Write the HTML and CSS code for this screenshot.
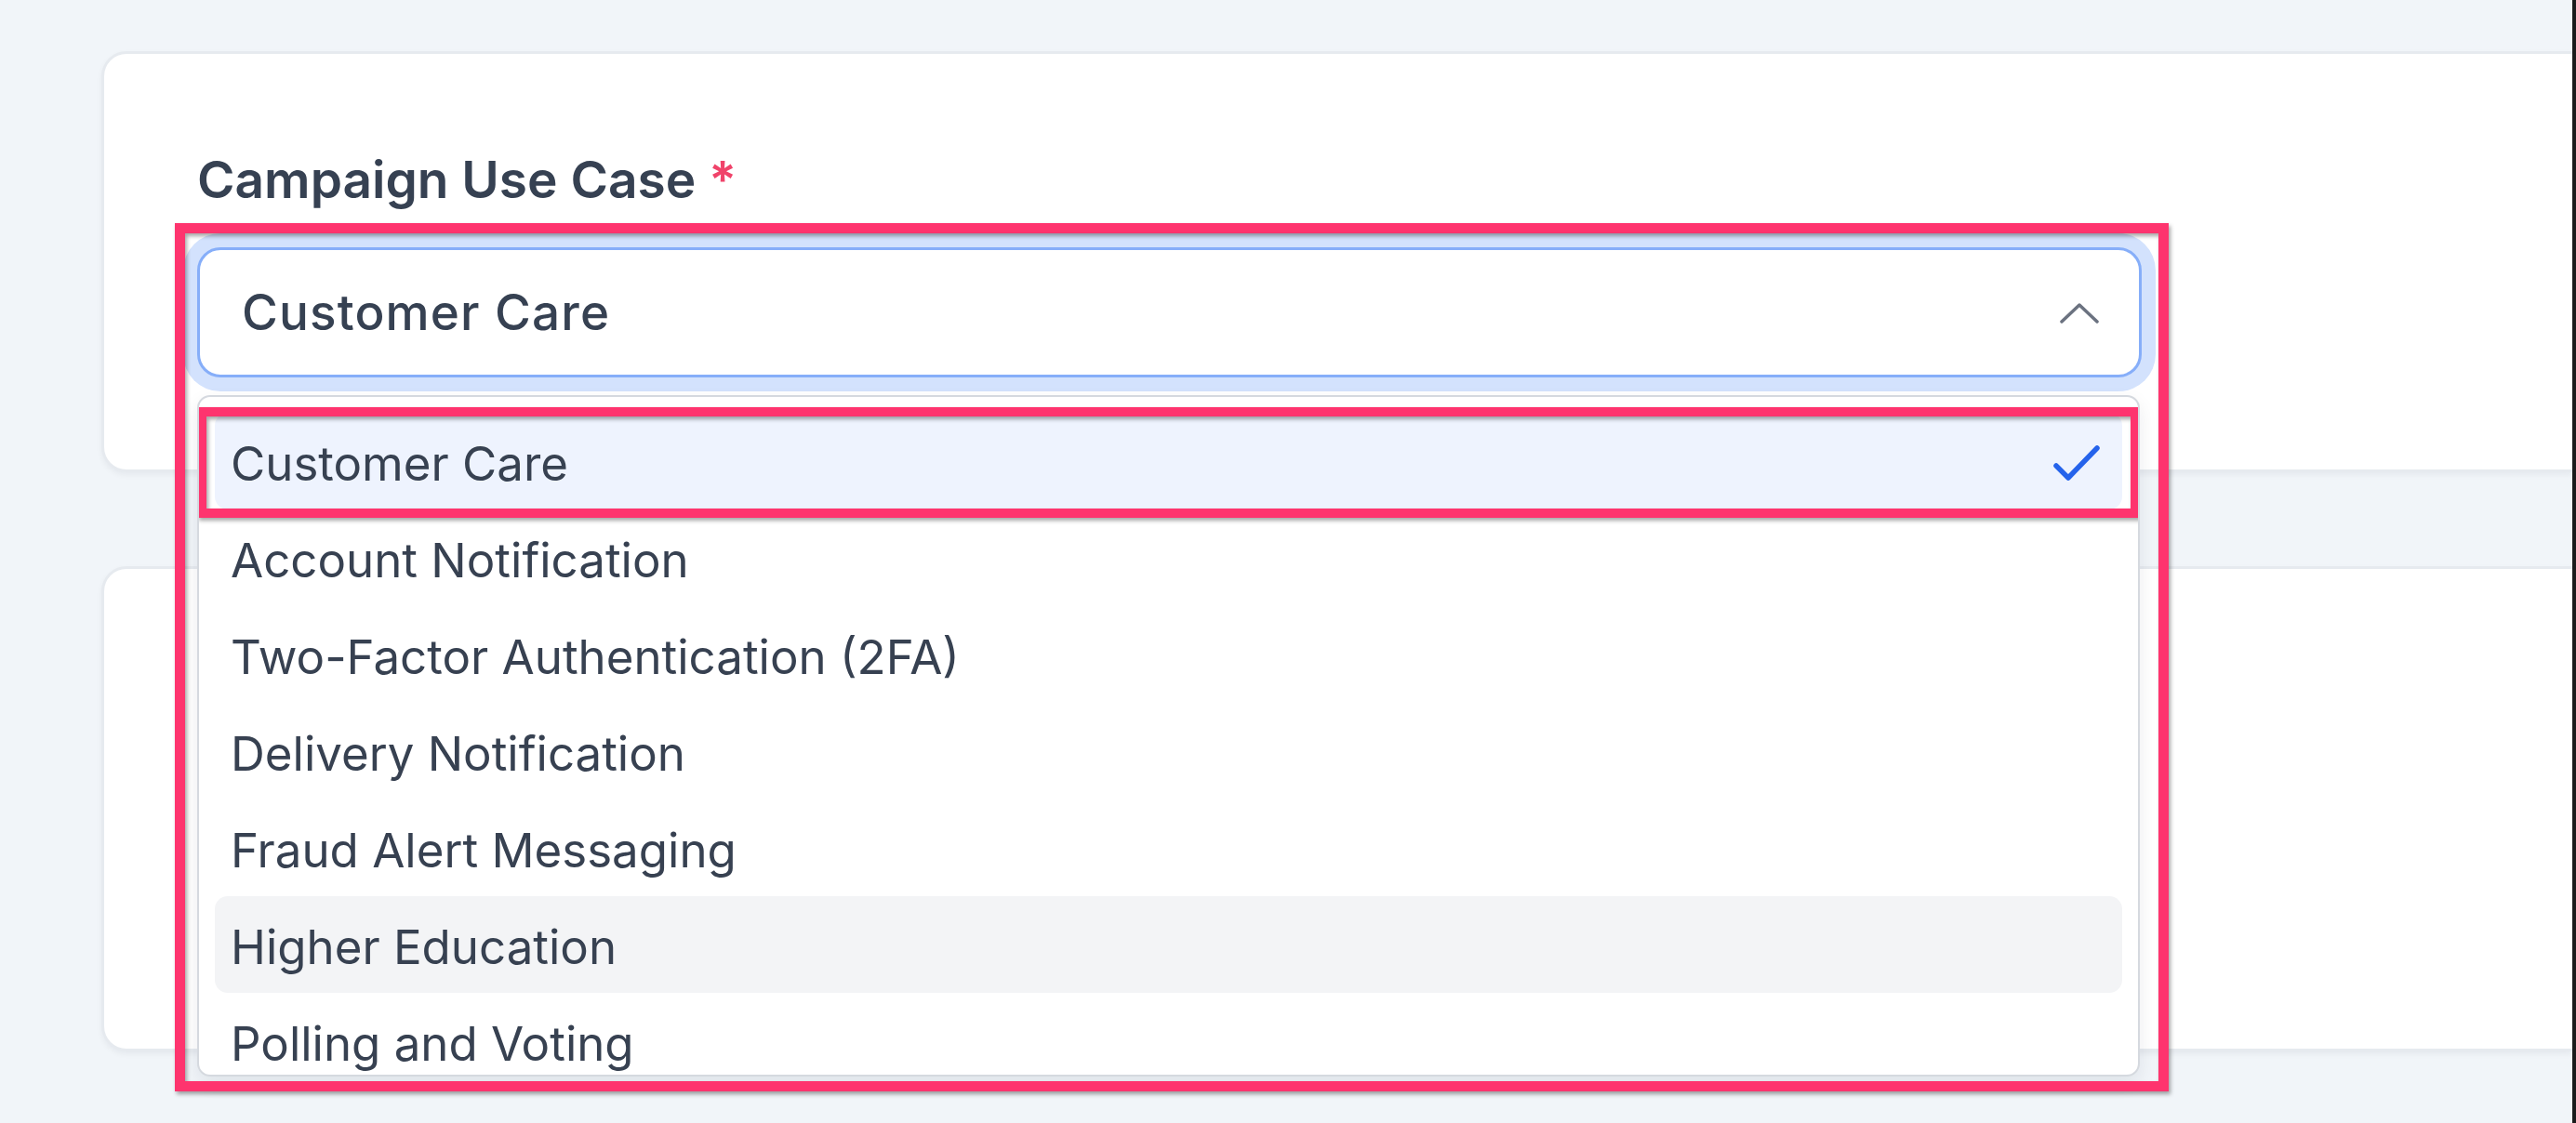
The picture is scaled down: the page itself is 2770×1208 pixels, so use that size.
FILE: index.html
```html
<!DOCTYPE html>
<html lang="en">
<head>
<meta charset="utf-8">
<title>Campaign Use Case</title>
<link rel="stylesheet" href="styles.css">
</head>
<body>
<div class="page">
  <main class="content">
    <section class="card card-top">
      <div class="field">
        <div class="label">Campaign Use Case <span class="req">*</span></div>
        <div class="select-wrap">
          <div class="select">
            <span class="select-value">Customer Care</span>
            <svg class="chevron" width="42" height="23" viewBox="0 0 42 23"><polyline points="2,21 21,3 40,21" fill="none" stroke="#6b7280" stroke-width="3.5" stroke-linecap="round" stroke-linejoin="round"/></svg>
          </div>
          <div class="dropdown">
            <div class="option selected"><span>Customer Care</span>
              <svg class="check" width="50" height="38" viewBox="0 0 50 38"><path d="M3 22 L16 35 L47 3" fill="none" stroke="#2563eb" stroke-width="5.5" stroke-linecap="round" stroke-linejoin="round"/></svg>
            </div>
            <div class="option"><span>Account Notification</span></div>
            <div class="option"><span>Two-Factor Authentication (2FA)</span></div>
            <div class="option"><span>Delivery Notification</span></div>
            <div class="option"><span>Fraud Alert Messaging</span></div>
            <div class="option hover"><span>Higher Education</span></div>
            <div class="option"><span>Polling and Voting</span></div>
            <div class="annot-inner"></div>
          </div>
        </div>
        <div class="annot-outer"></div>
      </div>
    </section>
    <section class="card card-bottom"></section>
  </main>
  <div class="edge"></div>
</div>
</body>
</html>
```

FILE: styles.css
```css
html, body {
  margin: 0;
  padding: 0;
}
body {
  background: #f1f5f9;
  font-family: Inter, "Noto Sans", "Liberation Sans", sans-serif;
  color: #364152;
  width: 2770px;
  height: 1208px;
  overflow: hidden;
}
.page {
  display: flex;
  height: 1208px;
}
.content {
  flex: 1;
  display: flex;
  flex-direction: column;
  gap: 101px;
  padding: 55px 0 0 109px;
  min-width: 0;
}
.edge {
  width: 4px;
  background: #1b1b1b;
}
.card {
  box-sizing: border-box;
  background: #ffffff;
  border: 3px solid #e6eaef;
  border-right: 0;
  border-radius: 27px 0 0 27px;
  box-shadow: 0 3px 6px rgba(15, 23, 42, 0.05);
}
.card-top {
  height: 453px;
  padding: 102px 0 0 100px;
}
.card-bottom {
  height: 522px;
}
.field {
  position: relative;
  width: 2091px;
}
.label {
  font-size: 55px;
  line-height: 66px;
  font-weight: 600;
  color: #364152;
  margin-bottom: 40px;
}
.req {
  color: #f0436a;
}
.select-wrap {
  position: relative;
}
.select {
  box-sizing: border-box;
  height: 140px;
  border: 3px solid #86aef9;
  border-radius: 25px;
  box-shadow: 0 0 0 15px #d3e2fd;
  background: #ffffff;
  display: flex;
  align-items: center;
  justify-content: space-between;
  padding: 0 43px 0 45px;
}
.select-value {
  font-size: 53px;
  font-weight: 500;
  letter-spacing: 1.15px;
  color: #364152;
}
.chevron {
  display: block;
}
.dropdown {
  position: absolute;
  z-index: 10;
  top: calc(100% + 19px);
  left: 0;
  box-sizing: border-box;
  width: 2089px;
  height: 733px;
  border: 2px solid #d5d9df;
  border-radius: 14px;
  background: #ffffff;
  padding: 17px;
  overflow: hidden;
  box-shadow: 0 8px 20px rgba(15, 23, 42, 0.08);
}
.option {
  box-sizing: border-box;
  height: 104px;
  display: flex;
  align-items: center;
  justify-content: space-between;
  padding: 5px 24px 0 17px;
  border-radius: 14px;
  font-size: 51px;
  font-weight: 400;
  color: #374151;
}
.option.selected {
  background: #eef3fe;
}
.option.hover {
  background: #f3f4f6;
}
.check {
  display: block;
  margin-top: -2px;
}
.annot-inner {
  position: absolute;
  z-index: 12;
  left: -2px;
  top: 11px;
  box-sizing: border-box;
  width: 2089px;
  height: 119px;
  border: 10px solid #fe346e;
  filter: drop-shadow(2px 3px 2px rgba(0, 0, 0, 0.35));
}
.annot-outer {
  position: absolute;
  z-index: 20;
  left: -24px;
  top: 80px;
  box-sizing: border-box;
  width: 2144px;
  height: 934px;
  border: 11px solid #fe346e;
  filter: drop-shadow(2px 3px 2px rgba(0, 0, 0, 0.35));
}
```
